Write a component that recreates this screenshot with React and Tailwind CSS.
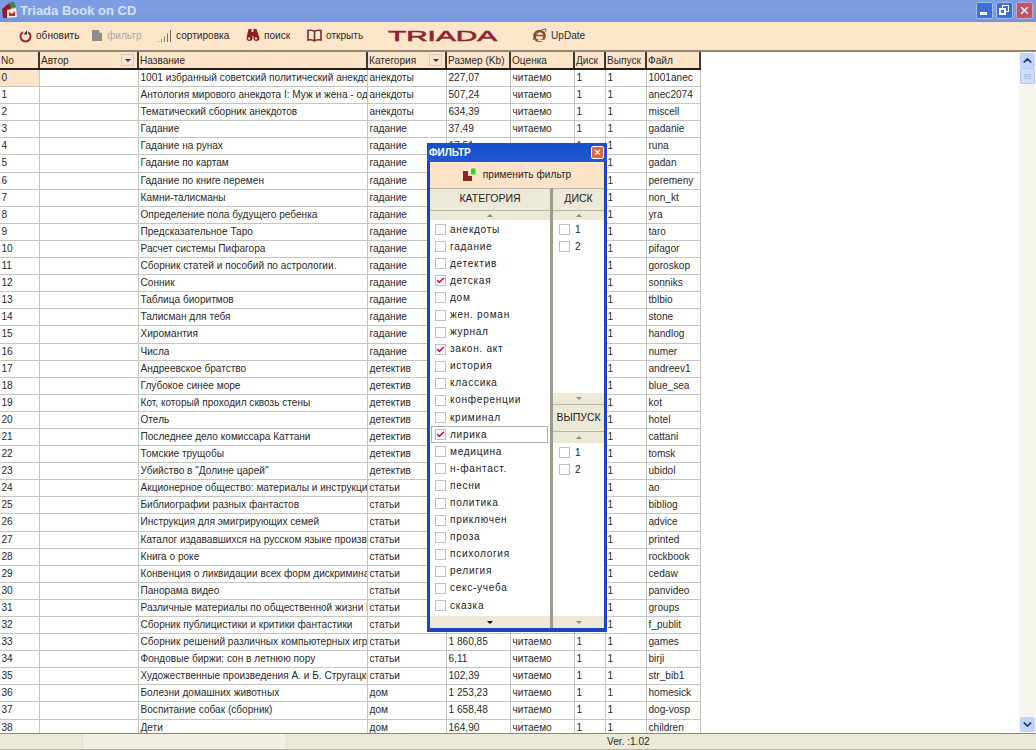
import { ChevronUp, ChevronDown, Check } from 'lucide-react';

const rows = [
  ['1001 избранный советский политический анекдот', 'анекдоты', '227,07', '1001anec'],
  ['Антология мирового анекдота I: Муж и жена - одна сатана', 'анекдоты', '507,24', 'anec2074'],
  ['Тематический сборник анекдотов', 'анекдоты', '634,39', 'miscell'],
  ['Гадание', 'гадание', '37,49', 'gadanie'],
  ['Гадание на рунах', 'гадание', '17,51', 'runa'],
  ['Гадание по картам', 'гадание', '', 'gadan'],
  ['Гадание по книге перемен', 'гадание', '', 'peremeny'],
  ['Камни-талисманы', 'гадание', '', 'non_kt'],
  ['Определение пола будущего ребенка', 'гадание', '', 'yra'],
  ['Предсказательное Таро', 'гадание', '', 'taro'],
  ['Расчет системы Пифагора', 'гадание', '', 'pifagor'],
  ['Сборник статей и пособий по астрологии.', 'гадание', '', 'goroskop'],
  ['Сонник', 'гадание', '', 'sonniks'],
  ['Таблица биоритмов', 'гадание', '', 'tblbio'],
  ['Талисман для тебя', 'гадание', '', 'stone'],
  ['Хиромантия', 'гадание', '', 'handlog'],
  ['Числа', 'гадание', '', 'numer'],
  ['Андреевское братство', 'детектив', '', 'andreev1'],
  ['Глубокое синее море', 'детектив', '', 'blue_sea'],
  ['Кот, который проходил сквозь стены', 'детектив', '', 'kot'],
  ['Отель', 'детектив', '', 'hotel'],
  ['Последнее дело комиссара Каттани', 'детектив', '', 'cattani'],
  ['Томские трущобы', 'детектив', '', 'tomsk'],
  ['Убийство в "Долине царей"', 'детектив', '', 'ubidol'],
  ['Акционерное общество: материалы и инструкции', 'статьи', '', 'ao'],
  ['Библиографии разных фантастов', 'статьи', '', 'bibliog'],
  ['Инструкция для эмигрирующих семей', 'статьи', '', 'advice'],
  ['Каталог издававшихся на русском языке произведений', 'статьи', '', 'printed'],
  ['Книга о роке', 'статьи', '', 'rockbook'],
  ['Конвенция о ликвидации всех форм дискриминации', 'статьи', '', 'cedaw'],
  ['Панорама видео', 'статьи', '', 'panvideo'],
  ['Различные материалы по общественной жизни России', 'статьи', '', 'groups'],
  ['Сборник публицистики и критики фантастики', 'статьи', '', 'f_publit'],
  ['Сборник решений различных компьютерных игр для PC', 'статьи', '1 860,85', 'games'],
  ['Фондовые биржи: сон в летнюю пору', 'статьи', '6,11', 'birji'],
  ['Художественные произведения А. и Б. Стругацких', 'статьи', '102,39', 'str_bib1'],
  ['Болезни домашних животных', 'дом', '1 253,23', 'homesick'],
  ['Воспитание собак (сборник)', 'дом', '1 658,48', 'dog-vosp'],
  ['Дети', 'дом', '164,90', 'children'],
];

const categories = [
  ['анекдоты'], ['гадание'], ['детектив'], ['детская', true], ['дом'], ['жен. роман'], ['журнал'],
  ['закон. акт', true], ['история'], ['классика'], ['конференции'], ['криминал'], ['лирика', true, true],
  ['медицина'], ['н-фантаст.'], ['песни'], ['политика'], ['приключен'], ['проза'], ['психология'],
  ['религия'], ['секс-учеба'], ['сказка'],
];

const cols = 'grid grid-cols-[40px_99px_229px_79px_64px_64px_31px_41px_54px] w-[701px]';

const Cell = ({ children, className = '' }) => (
  <div className={`border-r border-b border-[#c4c4c0] pl-[1.500px] overflow-hidden whitespace-nowrap leading-[15px] ${className}`}>
    {children}
  </div>
);

const Head = ({ children, filter }) => (
  <div className="flex items-center justify-between border-r-2 border-[#3a3a38] pl-[1px] pr-[2px] overflow-hidden whitespace-nowrap">
    <span>{children}</span>
    {filter && (
      <span className="w-[13px] h-[12px] mr-[1px] flex items-center justify-center bg-[#f3e6d4] border border-[#d8c8b4]">
        <span className="border-x-[3px] border-x-transparent border-t-[3px] border-t-[#5a2a20]" />
      </span>
    )}
  </div>
);

const ToolBtn = ({ icon, label, className = '' }) => (
  <div className={`flex items-center gap-[4px] whitespace-nowrap ${className}`}>
    {icon}
    <span>{label}</span>
  </div>
);

const Box = ({ checked }) => (
  <span className="w-[11px] h-[11px] shrink-0 border border-[#c0c0b8] bg-white flex items-center justify-center">
    {checked && <Check size={11} strokeWidth={4} className="text-[#d01030]" />}
  </span>
);

const Arrow = ({ down, dark, className = '' }) => (
  <div className={`flex items-center justify-center bg-[#ece9d8] ${className}`}>
    {down ? (
      <span className={`border-x-[3px] border-x-transparent border-t-[3px] ${dark ? 'border-t-black' : 'border-t-[#8a8a80]'}`} />
    ) : (
      <span className="border-x-[3px] border-x-transparent border-b-[3px] border-b-[#8a8a80]" />
    )}
  </div>
);

const PanelHead = ({ children, className = '' }) => (
  <div className={`flex items-center justify-center bg-[#ece9d8] border-y border-[#b8b4a4] text-[#222] text-[10.500px] pb-[1px] ${className}`}>
    {children}
  </div>
);

const NumList = ({ className = '' }) => (
  <div className={`bg-white pl-[6px] pt-[1px] ${className}`}>
    {['1', '2'].map((n) => (
      <div key={n} className="flex items-center gap-[5px] h-[17px]">
        <Box />
        <span>{n}</span>
      </div>
    ))}
  </div>
);

const FilterDialog = () => (
  <div className="absolute left-[427px] top-[143px] w-[180px] h-[489px] flex flex-col border-x-[3px] border-b-[4px] border-[#1c44bc] bg-[#ece9d8] text-[#222]">
    <div className="h-[19px] shrink-0 flex items-center justify-between -mx-[3px] pl-[1px] pr-[2px] bg-gradient-to-b from-[#1a4ec8] to-[#2058d4]">
      <span className="text-white text-[10px] font-bold pl-[1px]">ФИЛЬТР</span>
      <span className="w-[13px] h-[13px] mr-[1px] flex items-center justify-center rounded-[2px] bg-[#d9663f] border border-white text-white text-[11px] leading-none font-bold">×</span>
    </div>
    <div className="h-[26px] shrink-0 flex items-center justify-center gap-[6px] bg-[#fde4c8] pr-[3px] pl-[2px]">
      <svg width="15" height="15" viewBox="0 0 15 15">
        <path d="M1 3h5v5h4v5H1z" fill="#8a2a24" />
        <rect x="9" y="0.500" width="4.500" height="6" fill="#22dd22" />
      </svg>
      <span className="tracking-[0.050px]">применить фильтр</span>
    </div>
    <div className="flex flex-1 min-h-0">
      <div className="w-[120px] flex flex-col">
        <PanelHead className="h-[23px]">КАТЕГОРИЯ</PanelHead>
        <Arrow className="h-[9px]" />
        <div className="flex-1 bg-white pt-[1px] pl-[2px] tracking-[0.700px]">
          {categories.map(([name, checked, focus]) => (
            <div
              key={name}
              className={`flex items-center gap-[4px] h-[17.100px] pl-[3px] ${focus ? 'border border-[#b0b0a8] -ml-[1px] pl-[3px] mr-[2px]' : ''}`}
            >
              <Box checked={checked} />
              <span className="leading-none">{name}</span>
            </div>
          ))}
        </div>
        <Arrow down dark className="h-[12px]" />
      </div>
      <div className="w-[3px] bg-[#9c9a90]" />
      <div className="flex-1 flex flex-col">
        <PanelHead className="h-[23px]">ДИСК</PanelHead>
        <Arrow className="h-[9px]" />
        <NumList className="h-[173px]" />
        <Arrow down className="h-[11px]" />
        <PanelHead className="h-[28px]">ВЫПУСК</PanelHead>
        <Arrow className="h-[11px]" />
        <NumList className="flex-1" />
        <Arrow down className="h-[12px]" />
      </div>
    </div>
  </div>
);

export default function App() {
  return (
    <div className="relative w-[1036px] h-[750px] overflow-hidden flex flex-col bg-white text-[10.100px] text-[#2a2a2a] font-['Liberation_Sans',Arial,sans-serif]">
      {/* title bar */}
      <div className="h-[22px] shrink-0 flex items-center justify-between bg-gradient-to-b from-[#7a9ce2] via-[#7f9fe4] to-[#7494de] border-b border-[#8c8f9c] pl-[1px] pr-[3px]">
        <div className="flex items-center gap-[1px]">
          <svg width="18" height="17" viewBox="0 0 18 17">
            <path d="M1 7l7-6 2 3-1 12H2z" fill="#a01824" />
            <path d="M6 8l9-2 1 9-10 1z" fill="#f4eedc" />
            <path d="M9 0h4l2 5-5 1z" fill="#2a8a40" />
            <path d="M8 10l3 2 3-3v5H8z" fill="#b8302c" />
          </svg>
          <span className="text-[#d6e2f8] text-[13px] font-bold">Triada Book on CD</span>
        </div>
        <div className="flex gap-[3px]">
          <div className="w-[17px] h-[17px] rounded-[2px] bg-[#3e6fdc] border border-[#a4bcec] flex items-end pl-[3px] pb-[3px]">
            <span className="w-[7px] h-[3px] bg-white" />
          </div>
          <div className="w-[17px] h-[17px] rounded-[2px] bg-[#3e6fdc] border border-[#a4bcec] relative">
            <span className="absolute left-[5px] top-[2px] w-[7px] h-[7px] border border-white" />
            <span className="absolute left-[2px] top-[5px] w-[7px] h-[7px] border-2 border-white bg-[#3e6fdc]" />
          </div>
          <div className="w-[17px] h-[17px] rounded-[2px] bg-[#b9566a] border border-[#c9a4c4] flex items-center justify-center text-white text-[17px] leading-none">×</div>
        </div>
      </div>

      {/* toolbar */}
      <div className="h-[30px] shrink-0 flex items-center bg-[#fde5ca] border-b-2 border-[#8d8878] pl-[19px]">
        <ToolBtn
          className="w-[72px]"
          icon={
            <svg width="13" height="14" viewBox="0 0 13 14">
              <path d="M4 3.200a5 5 0 1 0 5 0" fill="none" stroke="#a02828" strokeWidth="2" />
              <path d="M8 1v4.500H4.500z" fill="#3a3a50" />
            </svg>
          }
          label="обновить"
        />
        <ToolBtn
          className="w-[66px] text-[#a8a8a4]"
          icon={
            <svg width="12" height="13" viewBox="0 0 12 13">
              <path d="M1 1h7v3h3v8H1z" fill="#8c8c88" />
              <path d="M8 1l3 3H8z" fill="#d0d0cc" />
            </svg>
          }
          label="фильтр"
        />
        <ToolBtn
          className="w-[88px] text-[#2a2a2a]"
          icon={
            <svg width="15" height="14" viewBox="0 0 15 14" strokeWidth="1">
              <path d="M1.500 13v-1" stroke="#d08a40" />
              <path d="M4.500 13v-3" stroke="#c07a40" />
              <path d="M7.500 13V7.500" stroke="#a07860" />
              <path d="M10.500 13V4.500" stroke="#7c6c60" />
              <path d="M13.500 13V1" stroke="#6c6c6c" />
            </svg>
          }
          label="сортировка"
        />
        <ToolBtn
          className="w-[62px]"
          icon={
            <svg width="15" height="13" viewBox="0 0 15 13">
              <path d="M3.500 0h3v3h2V0h3l3 9a3 3 0 1 1-6 0V7H7.500v2a3 3 0 1 1-6 0z" fill="#8c2024" />
              <circle cx="4" cy="9.500" r="1.200" fill="#e8c8b0" />
              <circle cx="11" cy="9.500" r="1.200" fill="#e8c8b0" />
            </svg>
          }
          label="поиск"
        />
        <ToolBtn
          className="w-[81px]"
          icon={
            <svg width="15" height="13" viewBox="0 0 15 13" fill="#f8e8d4" stroke="#7c2a26" strokeWidth="1.600">
              <path d="M7.500 2.500C6 1 3.500 1 1 1.500v9.500c2.500-.5 5-.5 6.500 1 1.500-1.500 4-1.500 6.500-1V1.500c-2.500-.5-5-.5-6.500 1zM7.500 2.500V12" />
            </svg>
          }
          label="открыть"
        />
        <svg width="112" height="22" viewBox="0 0 112 22" className="mr-[32px]">
          <text
            x="0"
            y="16"
            textLength="109"
            lengthAdjust="spacingAndGlyphs"
            fontFamily="'Liberation Sans', sans-serif"
            fontSize="14"
            fill="#8c2434"
            stroke="#8c2434"
            strokeWidth="0.500"
          >
            TRIADA
          </text>
        </svg>
        <ToolBtn
          icon={
            <svg width="15" height="15" viewBox="0 0 15 15">
              <circle cx="7.500" cy="8" r="5" fill="none" stroke="#8c4a30" strokeWidth="2.500" />
              <path d="M3 7.500h9" stroke="#8c4a30" strokeWidth="1.500" />
              <path d="M12 12.500h-6" stroke="#fde5ca" strokeWidth="1.500" />
              <path d="M1 12C4 5 9 1 14 1c0 2-1 3-2 4" fill="none" stroke="#6a5040" />
            </svg>
          }
          label="UpDate"
        />
      </div>

      {/* grid + scrollbar */}
      <div className="flex flex-1 min-h-0">
        <div className="flex-1 min-w-0 overflow-hidden">
          <div className={`${cols} h-[18px] bg-[#fde4c8] border-b-2 border-[#1e1e1c] leading-[15px]`}>
            <Head>No</Head>
            <Head filter>Автор</Head>
            <Head>Название</Head>
            <Head filter>Категория</Head>
            <Head>Размер (Kb)</Head>
            <Head>Оценка</Head>
            <Head>Диск</Head>
            <Head>Выпуск</Head>
            <Head>Файл</Head>
          </div>
          {rows.map((r, i) => (
            <div key={i} className={`${cols} h-[17.100px]`}>
              <Cell className={i === 0 ? 'bg-[#fde4c8]' : ''}>{i}</Cell>
              <Cell />
              <Cell>{r[0]}</Cell>
              <Cell>{r[1]}</Cell>
              <Cell>{r[2]}</Cell>
              <Cell>читаемо</Cell>
              <Cell>1</Cell>
              <Cell>1</Cell>
              <Cell>{r[3]}</Cell>
            </div>
          ))}
        </div>
        <div className="w-[17px] shrink-0 flex flex-col bg-[#f6f5ee]">
          <div className="h-[15px] mt-[1px] mx-[1px] rounded-[2px] bg-[#c3d4fb] flex items-center justify-center text-[#2a3c70]">
            <ChevronUp size={13} strokeWidth={3} />
          </div>
          <div className="h-[16px] mx-[1px] rounded-[2px] bg-[#cfdcfc] border border-[#b4c8f4] flex flex-col items-center justify-center gap-[1px]">
            <span className="w-[7px] h-px bg-[#a8bcec]" />
            <span className="w-[7px] h-px bg-[#a8bcec]" />
            <span className="w-[7px] h-px bg-[#a8bcec]" />
          </div>
          <div className="flex-1" />
          <div className="h-[15px] mb-[1px] mx-[1px] rounded-[2px] bg-[#c3d4fb] flex items-center justify-center text-[#2a3c70]">
            <ChevronDown size={13} strokeWidth={3} />
          </div>
        </div>
      </div>

      {/* status bar */}
      <div className="h-[17px] shrink-0 flex items-center bg-[#ece9d8] border-t border-[#8d8878] border-b border-b-[#b8b4a4]">
        <div className="w-[205px] h-full ml-[82px] bg-[#f1efe3] border-x border-[#e2dfcf]" />
        <span className="ml-[320px]">Ver. :1.02</span>
      </div>

      <FilterDialog />
    </div>
  );
}
